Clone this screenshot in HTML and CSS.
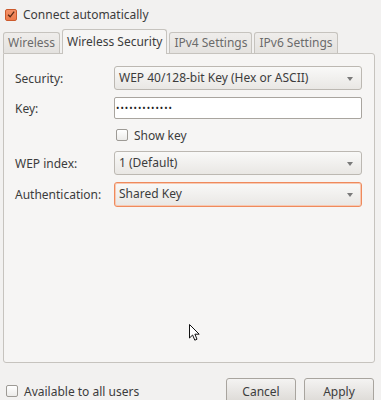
FILE: index.html
```html
<!DOCTYPE html>
<html lang="en">
<head>
  <meta charset="UTF-8" />
  <title>Editing Wireless connection</title>
  <meta name="viewport" content="width=device-width, initial-scale=1" />
  <link rel="stylesheet" href="styles.css">
</head>
<body>

  <!-- Top option -->
  <label class="check-row top">
    <span class="check checked">
      <svg viewBox="0 0 12 12"><path d="M2.5 6.2 L5 8.8 L9.8 2.6" /></svg>
    </span>
    Connect automatically
  </label>

  <!-- Tabs -->
  <div class="tabs">
    <div class="tab">Wireless</div>
    <div class="tab active">Wireless Security</div>
    <div class="tab">IPv4 Settings</div>
    <div class="tab">IPv6 Settings</div>
  </div>

  <!-- Tab page -->
  <div class="panel">
    <div class="row row-security">
      <span class="label">Security:</span>
      <div class="combo">WEP 40/128-bit Key (Hex or ASCII)<span class="arrow"></span></div>
    </div>
    <div class="row row-key">
      <span class="label">Key:</span>
      <div class="entry">•••••••••••••</div>
    </div>
    <div class="row row-show">
      <span class="label"></span>
      <label class="check-row">
        <span class="check"></span>
        Show key
      </label>
    </div>
    <div class="row row-index">
      <span class="label">WEP index:</span>
      <div class="combo">1 (Default)<span class="arrow"></span></div>
    </div>
    <div class="row row-auth">
      <span class="label">Authentication:</span>
      <div class="combo focused">Shared Key<span class="arrow"></span></div>
    </div>
  </div>

  <!-- Footer -->
  <div class="footer">
    <label class="check-row">
      <span class="check"></span>
      Available to all users
    </label>
    <div class="buttons">
      <button class="btn">Cancel</button>
      <button class="btn">Apply</button>
    </div>
  </div>

  <!-- Mouse pointer -->
  <svg class="pointer" viewBox="0 0 12 18">
    <path d="M0.5 0.5 L0.5 14 L3.6 11 L5.8 16.2 L8 15.2 L5.9 10.2 L10.2 10.2 Z" />
  </svg>

</body>
</html>
```

FILE: styles.css
```css
html, body {
  margin: 0;
  padding: 0;
}

body {
  width: 381px;
  height: 400px;
  overflow: hidden;
  position: relative;
  background: #f2f1f0;
  color: #3c3c3c;
  font-family: 'Noto Sans', 'DejaVu Sans', sans-serif;
  font-size: 12px;
}

.check-row {
  display: flex;
  align-items: center;
  gap: 6px;
  cursor: default;
}

.check-row.top {
  padding: 7px 0 0 5px;
  height: 15px;
}

.check {
  box-sizing: border-box;
  width: 12px;
  height: 12px;
  border: 1px solid #9d9a95;
  border-radius: 2px;
  background: linear-gradient(#ffffff, #ecebe9);
  display: flex;
  align-items: center;
  justify-content: center;
}

.check.checked {
  border-color: #cc5a2c;
  background: linear-gradient(#f4936a, #ec7a4a);
}

.check svg {
  width: 11px;
  height: 11px;
}

.check svg path {
  fill: none;
  stroke: #5a2a14;
  stroke-width: 1.6;
}

/* tabs */
.tabs {
  display: flex;
  align-items: flex-end;
  gap: 2px;
  margin: 7px 0 0 3px;
  height: 24px;
  position: relative;
  z-index: 1;
}

.tab {
  box-sizing: border-box;
  height: 21px;
  padding: 0 4px;
  line-height: 20px;
  border: 1px solid #c6c3be;
  border-bottom: none;
  border-radius: 3px 3px 0 0;
  background: linear-gradient(#efedeb, #e4e2df);
  color: #6b6b6b;
}

.tab.active {
  height: 25px;
  margin-bottom: -1px;
  line-height: 24px;
  background: #f6f5f4;
  color: #3c3c3c;
}

/* page */
.panel {
  box-sizing: border-box;
  width: 372px;
  height: 310px;
  margin-left: 3px;
  padding: 12px 12px 0 11px;
  border: 1px solid #c6c3be;
  border-radius: 0 3px 3px 3px;
  background: #f6f5f4;
}

.row {
  display: flex;
  align-items: center;
}

.label {
  width: 99px;
  flex: none;
}

.row-key { margin-top: 7px; }
.row-show { margin-top: 5px; height: 22px; }
.row-show .check-row { padding-left: 2px; }
.row-index { margin-top: 5px; }
.row-auth { margin-top: 7px; }

.combo {
  box-sizing: border-box;
  position: relative;
  width: 249px;
  height: 24px;
  padding: 0 4px;
  line-height: 22px;
  border: 1px solid #bcb8b2;
  border-radius: 3px;
  background: linear-gradient(#f9f9f8, #e9e7e4);
}

.combo.focused {
  height: 25px;
  border-color: #ef8a5c;
  box-shadow: inset 0 0 0 1px #f7c9b3;
}

.arrow {
  position: absolute;
  right: 8px;
  top: 10px;
  width: 0;
  height: 0;
  border-left: 3.5px solid transparent;
  border-right: 3.5px solid transparent;
  border-top: 4px solid #7a7a7a;
}

.entry {
  box-sizing: border-box;
  width: 249px;
  height: 22px;
  padding: 0 1px;
  line-height: 20px;
  border: 1px solid #a9a59f;
  border-radius: 2px;
  background: #ffffff;
  color: #1e1e1e;
  font-size: 9px;
  letter-spacing: 1px;
}

/* footer */
.footer {
  display: flex;
  justify-content: space-between;
  align-items: center;
  padding: 15px 7px 0 6px;
}

.buttons {
  display: flex;
  gap: 8px;
}

.btn {
  box-sizing: border-box;
  width: 70px;
  height: 26px;
  padding: 0;
  border: 1px solid #a8a49e;
  border-radius: 3px;
  background: linear-gradient(#f4f3f2, #dcd9d5);
  color: #3c3c3c;
  font-family: inherit;
  font-size: 12px;
}

.pointer {
  position: absolute;
  left: 189px;
  top: 324px;
  width: 12px;
  height: 18px;
}

.pointer path {
  fill: #ffffff;
  stroke: #111111;
  stroke-width: 1;
}
```
